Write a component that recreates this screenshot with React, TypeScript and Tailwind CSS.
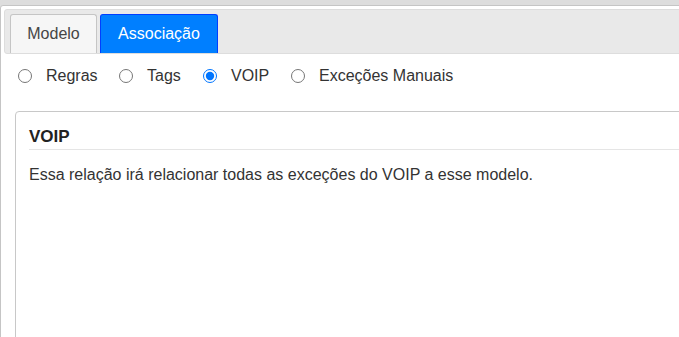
import React from "react";

export default function App() {
  const radios = [
    { label: "Regras", checked: false, w: "w-[101px]" },
    { label: "Tags", checked: false, w: "w-[84px]" },
    { label: "VOIP", checked: true, w: "w-[88px]" },
    { label: "Exceções Manuais", checked: false, w: "" },
  ];
  return (
    <div
      className="h-[337px] w-[679px] overflow-hidden bg-[#dddddd] pt-[5px] text-[16px] text-[#333333]"
      style={{ fontFamily: '"Liberation Sans", Arial, sans-serif' }}
    >
      <div className="h-[400px] w-[720px] rounded-tl-[3px] border border-[#c5c5c5] bg-white p-[3px]">
        <div className="flex h-[45px] items-end gap-[3px] rounded-[3px] border border-[#dddddd] bg-[#e9e9e9] pl-[5px] pt-[4px]">
          <div className="flex h-[39px] w-[87px] items-center justify-center rounded-t-[3px] border border-b-0 border-[#c5c5c5] bg-[#f6f6f6] text-[#454545]">
            Modelo
          </div>
          <div className="flex h-[39px] w-[118px] items-center justify-center rounded-t-[3px] border border-b-0 border-[#003eff] bg-[#007fff] text-white">
            Associação
          </div>
        </div>
        <div className="mt-[11px] flex h-[22px] items-center pl-[14px]">
          {radios.map((r) => (
            <label key={r.label} className={"flex shrink-0 items-center " + r.w}>
              <input
                type="radio"
                name="assoc"
                defaultChecked={r.checked}
                className="m-0 h-[14px] w-[14px] accent-[#0075ff]"
              />
              <span className="ml-[14px]">{r.label}</span>
            </label>
          ))}
        </div>
        <div className="ml-[11px] mt-[24px] h-[300px] rounded-[4px] border border-[#c8c8c8] px-[13px] pt-[15px]">
          <div className="border-b border-[#e5e5e5] pb-[2px] text-[17px] font-bold leading-[20px] text-[#222222]">
            VOIP
          </div>
          <p className="mt-[16px] leading-[18px]">
            Essa relação irá relacionar todas as exceções do VOIP a esse modelo.
          </p>
        </div>
      </div>
    </div>
  );
}
